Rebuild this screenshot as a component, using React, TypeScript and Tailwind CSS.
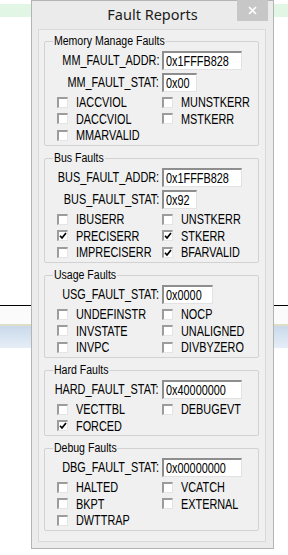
import React from "react";

type FieldProps = {
  label: string;
  value: string;
  width: string;
};

type BoxProps = {
  label: string;
  checked?: boolean;
};

// the dialog font is a narrow one, so squeeze Liberation Sans sideways
const Narrow = ({ children, right }: { children: React.ReactNode; right?: boolean }) => (
  <span
    className={`inline-block shrink-0 scale-x-[0.75] whitespace-nowrap ${right ? "origin-right" : "origin-left"}`}
  >
    {children}
  </span>
);

const Field = ({ label, value, width }: FieldProps) => {
  return (
    <div className="flex h-[19px] items-center">
      <div className="flex w-[114px] shrink-0 justify-end leading-[19px]">
        <Narrow right>{label}</Narrow>
      </div>
      <div
        className={`ml-[3px] flex h-[19px] items-center overflow-hidden border-t-2 border-l-2 border-t-[#8e8e8e] border-l-[#8e8e8e] border-r border-b border-r-[#e2e2e2] border-b-[#e2e2e2] bg-white pl-[2px] leading-none ${width}`}
      >
        <Narrow>{value}</Narrow>
      </div>
    </div>
  );
};

const Check = ({ label, checked }: BoxProps) => {
  return (
    <div className="flex h-[16.5px] items-center">
      <div className="flex h-[11px] w-[11px] shrink-0 items-center justify-center border-t-2 border-l-2 border-t-[#9c9c9c] border-l-[#9c9c9c] border-r border-b border-r-[#e4e4e4] border-b-[#e4e4e4] bg-white">
        {checked && (
          <svg width="8" height="8" viewBox="0 0 8 8">
            <path d="M1 3.8 L3 6 L7 1" fill="none" stroke="#000" strokeWidth="1.7" />
          </svg>
        )}
      </div>
      <span className="ml-[8px] leading-none">
        <Narrow>{label}</Narrow>
      </span>
    </div>
  );
};

const Group = ({ title, children }: { title: string; children: React.ReactNode }) => {
  return (
    <div className="relative rounded-[2px] border border-[#d2d2d2] pt-[9px] pb-[1px]">
      <span className="absolute -top-[8px] left-[8px] origin-left scale-x-[0.88] bg-[#f0f0f0] px-[1px] text-[12px] leading-[14px] whitespace-nowrap">
        {title}
      </span>
      {children}
    </div>
  );
};

const Boxes = ({ children }: { children: React.ReactNode }) => (
  <div className="mt-[2px] grid grid-cols-[105px_1fr] pl-[12px]">{children}</div>
);

const App = () => {
  return (
    <div className="relative h-[555px] w-[288px] overflow-hidden bg-white font-['Liberation_Sans',Arial,sans-serif] text-[14.5px] text-black">
      {/* desktop behind the dialog */}
      <div className="flex flex-col pt-[4px]">
        <div className="h-[13px] bg-[#e2f6e6]" />
        <div className="h-[288px]" />
        <div className="h-px bg-black" />
        <div className="h-[18px] bg-[#fbfbfb]" />
        <div className="h-[2px] bg-[#dcdec6]" />
        <div className="h-[22px] bg-gradient-to-b from-[#c9d9ea] to-[#e6eef7]" />
      </div>

      {/* dialog */}
      <div className="absolute top-0 left-[31px] h-[549px] w-[243px] border border-[#b4b4b4] bg-[#ebebeb]">
        <div className="flex h-[28px] items-center justify-center pb-[1px] font-['Noto_Sans',sans-serif] text-[14.5px] text-[#1c1c1c]">
          Fault Reports
        </div>
        <div className="absolute -top-px right-[5px] flex h-[21px] w-[31px] items-center justify-center bg-[#c7c7c7]">
          <svg width="9" height="9" viewBox="0 0 9 9">
            <path d="M1 1 L8 8 M8 1 L1 8" stroke="#fff" strokeWidth="1.6" />
          </svg>
        </div>

        <div className="ml-[6px] flex h-[513px] w-[228px] flex-col border border-[#d9d9d9] bg-[#f0f0f0] pt-[11px] pr-[6px] pl-[5px]">
          <Group title="Memory Manage Faults">
            <div className="flex flex-col gap-[3px]">
              <Field label="MM_FAULT_ADDR:" value="0x1FFFB828" width="w-[80px]" />
              <Field label="MM_FAULT_STAT:" value="0x00" width="w-[35px]" />
            </div>
            <Boxes>
              <Check label="IACCVIOL" />
              <Check label="MUNSTKERR" />
              <Check label="DACCVIOL" />
              <Check label="MSTKERR" />
              <Check label="MMARVALID" />
            </Boxes>
          </Group>

          <div className="mt-[12.5px]">
            <Group title="Bus Faults">
              <div className="flex flex-col gap-[3px]">
                <Field label="BUS_FAULT_ADDR:" value="0x1FFFB828" width="w-[80px]" />
                <Field label="BUS_FAULT_STAT:" value="0x92" width="w-[35px]" />
              </div>
              <Boxes>
                <Check label="IBUSERR" />
                <Check label="UNSTKERR" />
                <Check label="PRECISERR" checked />
                <Check label="STKERR" checked />
                <Check label="IMPRECISERR" />
                <Check label="BFARVALID" checked />
              </Boxes>
            </Group>
          </div>

          <div className="mt-[12.5px]">
            <Group title="Usage Faults">
              <Field label="USG_FAULT_STAT:" value="0x0000" width="w-[51px]" />
              <Boxes>
                <Check label="UNDEFINSTR" />
                <Check label="NOCP" />
                <Check label="INVSTATE" />
                <Check label="UNALIGNED" />
                <Check label="INVPC" />
                <Check label="DIVBYZERO" />
              </Boxes>
            </Group>
          </div>

          <div className="mt-[12.5px]">
            <Group title="Hard Faults">
              <Field label="HARD_FAULT_STAT:" value="0x40000000" width="w-[80px]" />
              <Boxes>
                <Check label="VECTTBL" />
                <Check label="DEBUGEVT" />
                <Check label="FORCED" checked />
              </Boxes>
            </Group>
          </div>

          <div className="mt-[12px]">
            <Group title="Debug Faults">
              <Field label="DBG_FAULT_STAT:" value="0x00000000" width="w-[80px]" />
              <Boxes>
                <Check label="HALTED" />
                <Check label="VCATCH" />
                <Check label="BKPT" />
                <Check label="EXTERNAL" />
                <Check label="DWTTRAP" />
              </Boxes>
            </Group>
          </div>
        </div>
      </div>
    </div>
  );
};

export default App;
